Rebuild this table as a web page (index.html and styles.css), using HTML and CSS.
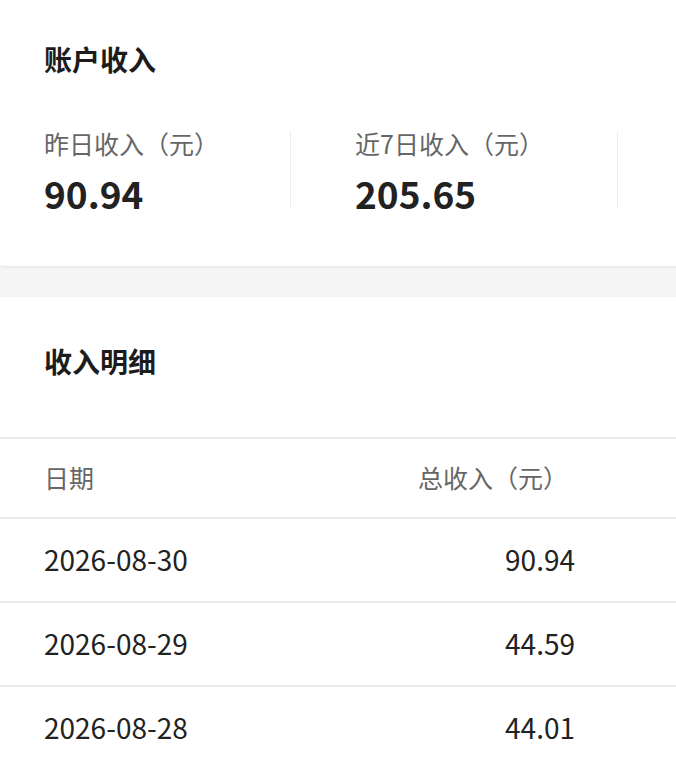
FILE: index.html
```html
<!DOCTYPE html>
<html lang="zh-CN">
<head>
<meta charset="utf-8">
<title>账户收入</title>
<link rel="stylesheet" href="styles.css">
</head>
<body>
<div class="page">
  <section class="card summary">
    <h2 class="card-title">账户收入</h2>
    <div class="stats">
      <div class="stat">
        <div class="stat-label">昨日收入（元）</div>
        <div class="stat-value">90.94</div>
      </div>
      <div class="stat">
        <div class="stat-label">近7日收入（元）</div>
        <div class="stat-value">205.65</div>
      </div>
    </div>
  </section>

  <section class="card detail">
    <div class="detail-head">
      <h2 class="card-title">收入明细</h2>
    </div>
    <div class="table">
      <div class="row head">
        <div class="cell">日期</div>
        <div class="cell amount">总收入（元）</div>
      </div>
      <div class="row">
        <div class="cell">2026-08-30</div>
        <div class="cell amount">90.94</div>
      </div>
      <div class="row">
        <div class="cell">2026-08-29</div>
        <div class="cell amount">44.59</div>
      </div>
      <div class="row">
        <div class="cell">2026-08-28</div>
        <div class="cell amount">44.01</div>
      </div>
    </div>
  </section>
</div>
</body>
</html>
```

FILE: styles.css
```css
html, body {
  margin: 0;
  padding: 0;
  overflow: hidden;
  background: #f5f5f5;
}

body {
  font-family: "Noto Sans CJK SC", "Noto Sans", sans-serif;
  color: #222;
}

.page {
  display: flex;
  flex-direction: column;
  gap: 31px;
  margin-left: -4px;
  width: 760px;
}

.card {
  background: #fff;
  border-radius: 8px;
  box-shadow: 0 1px 3px rgba(0, 0, 0, 0.08);
}

.summary {
  border-top-left-radius: 0;
  border-top-right-radius: 0;
  padding: 45px 0 58px 48px;
}

.card-title {
  margin: 0;
  font-size: 28px;
  line-height: 28px;
  font-weight: 700;
  color: #1c1c1c;
}

.stats {
  display: flex;
  margin-top: 58px;
}

.stat {
  box-sizing: border-box;
  width: 327px;
  height: 77px;
  padding-left: 64px;
  border-right: 1px solid #eeeeee;
  display: flex;
  flex-direction: column;
  justify-content: space-between;
}

.stat:first-child {
  width: 247px;
  padding-left: 0;
}

.stat-label {
  font-size: 25px;
  line-height: 25px;
  color: #666;
}

.stat-value {
  font-size: 37px;
  line-height: 37px;
  font-weight: 700;
  color: #222;
  margin-bottom: -4px;
}

.detail-head {
  box-sizing: border-box;
  height: 140px;
  padding: 50px 0 0 48px;
}

.table {
  display: flex;
  flex-direction: column;
}

.row {
  box-sizing: border-box;
  display: grid;
  grid-template-columns: 374px 157px;
  align-items: center;
  height: 84px;
  padding: 0 0 3px 48px;
  border-top: 2px solid #ebebeb;
  font-size: 28px;
  line-height: 36px;
  color: #222;
}

.row.head {
  height: 80px;
  padding-bottom: 2px;
  font-size: 25px;
  color: #666;
}

.cell.amount {
  text-align: right;
}

.row.head .cell.amount {
  text-align: left;
}
```
